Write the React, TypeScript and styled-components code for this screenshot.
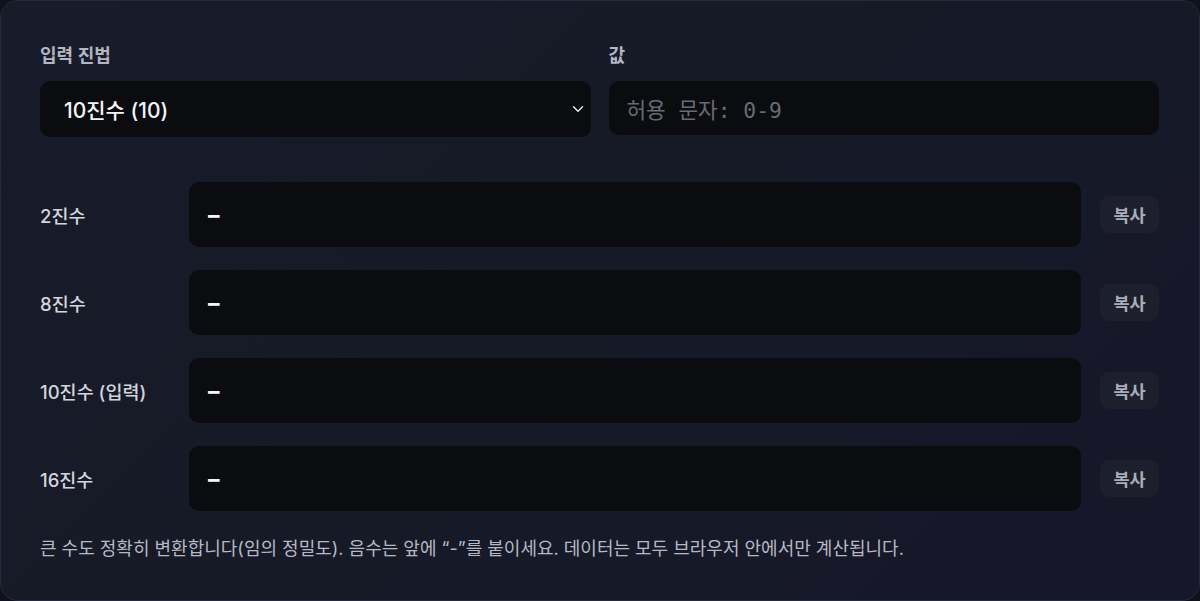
import React from "react";
import styled, { createGlobalStyle } from "styled-components";

const Global = createGlobalStyle`
  html, body { margin: 0; padding: 0; background: #10121b; }
  body { font-family: Inter, "Noto Sans CJK KR", sans-serif; }
  * { box-sizing: border-box; }
`;

const Card = styled.div`
  width: 1200px;
  height: 601px;
  border: 1px solid #262a3b;
  border-radius: 18px;
  background: linear-gradient(135deg, #181c2a 0%, #161a27 50%, #16172a 100%);
  padding: 43px 40px 0 39px;
  display: flex;
  flex-direction: column;
`;

const TopGrid = styled.div`
  display: grid;
  grid-template-columns: 1fr 1fr;
  column-gap: 18px;
`;

const Field = styled.div`
  display: flex;
  flex-direction: column;
  gap: 13px;
`;

const FieldLabel = styled.div`
  font-size: 18px;
  line-height: 24px;
  font-weight: 600;
  color: #b3b7c3;
`;

const SelectBox = styled.div`
  height: 56px;
  border-radius: 10px;
  background: #0b0c10;
  display: flex;
  align-items: center;
  justify-content: space-between;
  padding: 0 4px 0 24px;
  color: #f3f4f7;
  font-size: 21px;
  font-weight: 500;
`;

const ValueInput = styled.div`
  height: 54px;
  border-radius: 10px;
  background: #0b0c10;
  display: flex;
  align-items: center;
  padding: 0 18px;
  font-family: "DejaVu Sans Mono", "Noto Sans CJK KR", monospace;
  font-size: 21.3px;
  color: #676b76;
`;

const Rows = styled.div`
  margin-top: 45px;
  display: flex;
  flex-direction: column;
  gap: 23px;
`;

const Row = styled.div`
  display: grid;
  grid-template-columns: 130px 1fr 59px;
  column-gap: 19px;
  align-items: center;
`;

const RowLabel = styled.div`
  font-size: 18.5px;
  font-weight: 500;
  color: #d3d5dc;
  white-space: nowrap;
`;

const Output = styled.div`
  height: 65px;
  border-radius: 10px;
  background: #0b0c10;
  display: flex;
  align-items: center;
  padding: 0 19px;
  color: #f4f5f8;
  font-size: 23px;
  font-weight: 700;
`;

const CopyButton = styled.button`
  height: 37px;
  border: none;
  border-radius: 9px;
  background: #1d1f2c;
  color: #a9adb9;
  font-family: Inter, "Noto Sans CJK KR", sans-serif;
  font-size: 17.5px;
  font-weight: 600;
  padding: 0;
`;

const Footer = styled.p`
  margin: 26px 0 0;
  font-size: 18px;
  line-height: 24px;
  color: #b6b9c3;
  white-space: nowrap;
`;

const Chevron = () => (
  <svg width="18" height="18" viewBox="0 0 24 24" fill="none" stroke="#e6e7eb" strokeWidth="2" strokeLinecap="round" strokeLinejoin="round">
    <path d="M6 9l6 6 6-6" />
  </svg>
);

const rows = ["2진수", "8진수", "10진수 (입력)", "16진수"];

export default function App() {
  return (
    <>
      <Global />
      <Card>
        <TopGrid>
          <Field>
            <FieldLabel>입력 진법</FieldLabel>
            <SelectBox>
              <span>10진수 (10)</span>
              <Chevron />
            </SelectBox>
          </Field>
          <Field>
            <FieldLabel>값</FieldLabel>
            <ValueInput>허용 문자: 0-9</ValueInput>
          </Field>
        </TopGrid>
        <Rows>
          {rows.map((r) => (
            <Row key={r}>
              <RowLabel>{r}</RowLabel>
              <Output>–</Output>
              <CopyButton>복사</CopyButton>
            </Row>
          ))}
        </Rows>
        <Footer>
          큰 수도 정확히 변환합니다(임의 정밀도). 음수는 앞에 “-”를 붙이세요. 데이터는 모두 브라우저 안에서만 계산됩니다.
        </Footer>
      </Card>
    </>
  );
}
